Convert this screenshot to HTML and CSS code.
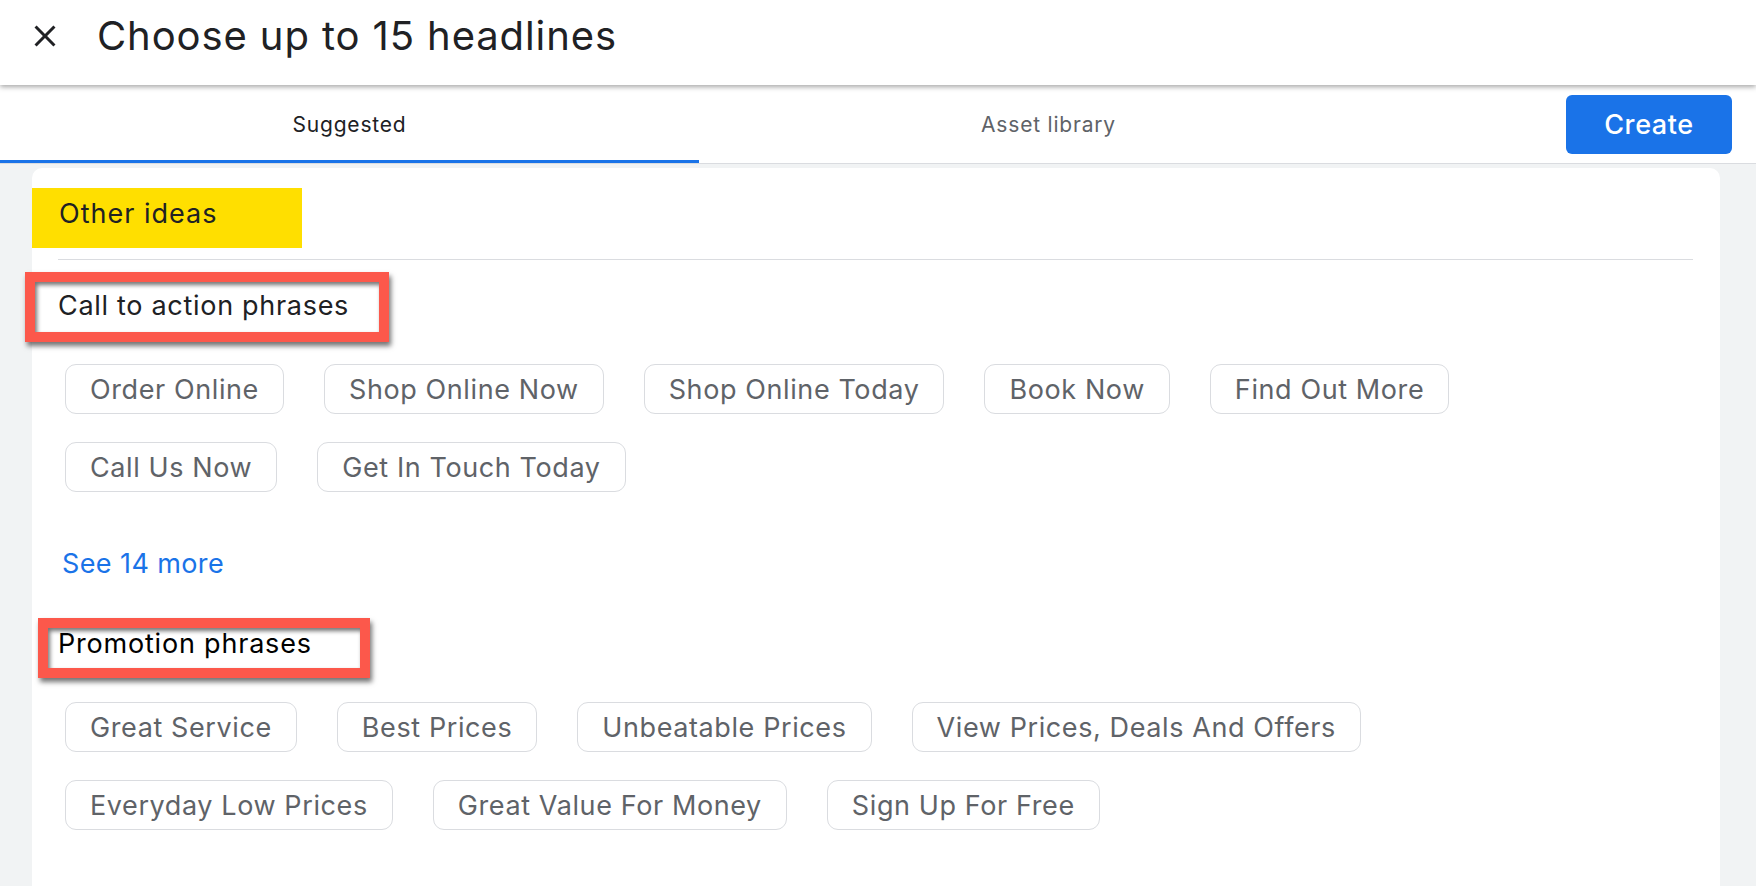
FILE: index.html
```html
<!DOCTYPE html>
<html lang="en">
<head>
<meta charset="utf-8">
<title>Choose up to 15 headlines</title>
<link rel="stylesheet" href="styles.css">
</head>
<body>
<header class="header">
  <svg class="close-icon" viewBox="0 0 24 24" width="36" height="36" aria-hidden="true"><path d="M19 6.41L17.59 5 12 10.59 6.41 5 5 6.41 10.59 12 5 17.59 6.41 19 12 13.41 17.59 19 19 17.59 13.41 12z" fill="#202124"/></svg>
  <h1 class="title">Choose up to 15 headlines</h1>
</header>
<nav class="tabbar">
  <div class="tab tab-active">Suggested</div>
  <div class="tab">Asset library</div>
  <button class="create-btn">Create</button>
</nav>
<main class="main">
  <section class="card">
    <div class="other-ideas">Other ideas</div>
    <hr class="divider">
    <h2 class="group-title group-cta"><span class="annot annot-cta"></span>Call to action phrases</h2>
    <div class="chips">
      <span class="chip">Order Online</span>
      <span class="chip">Shop Online Now</span>
      <span class="chip">Shop Online Today</span>
      <span class="chip">Book Now</span>
      <span class="chip">Find Out More</span>
      <span class="chip">Call Us Now</span>
      <span class="chip">Get In Touch Today</span>
    </div>
    <a class="see-more" href="#">See 14 more</a>
    <h2 class="group-title group-promo"><span class="annot annot-promo"></span>Promotion phrases</h2>
    <div class="chips">
      <span class="chip">Great Service</span>
      <span class="chip">Best Prices</span>
      <span class="chip">Unbeatable Prices</span>
      <span class="chip">View Prices, Deals And Offers</span>
      <span class="chip">Everyday Low Prices</span>
      <span class="chip">Great Value For Money</span>
      <span class="chip">Sign Up For Free</span>
    </div>
  </section>
</main>
</body>
</html>
```
FILE: styles.css
```css
* { box-sizing: border-box; }
html, body { margin: 0; padding: 0; }
body {
  font-family: Inter, Roboto, "Liberation Sans", sans-serif;
  color: #202124;
  background: #f1f3f4;
  width: 1756px;
  height: 886px;
  overflow: hidden;
  display: flex;
  flex-direction: column;
}
.header {
  position: relative;
  z-index: 2;
  height: 85px;
  background: #fff;
  display: flex;
  align-items: flex-start;
  padding: 18px 0 0 27px;
  box-shadow: 0 2px 5px rgba(0,0,0,0.35);
}
.close-icon { flex: none; display: block; }
.title {
  margin: -6px 0 0 34px;
  font-size: 40px;
  line-height: 48px;
  font-weight: 400;
  letter-spacing: 0.9px;
  color: #202124;
}
.tabbar {
  height: 79px;
  background: #fff;
  border-bottom: 1px solid #dadce0;
  display: flex;
  align-items: center;
}
.tab {
  width: 699px;
  height: 100%;
  display: flex;
  align-items: center;
  justify-content: center;
  font-size: 21px;
  letter-spacing: 0.8px;
  color: #5f6368;
  border-bottom: 3px solid transparent;
  padding-top: 3px;
}
.tab-active {
  color: #202124;
  border-bottom-color: #1a73e8;
}
.create-btn {
  margin-left: 168px;
  width: 166px;
  height: 59px;
  border: 0;
  border-radius: 6px;
  background: #1a73e8;
  color: #fff;
  font-family: inherit;
  font-size: 27px;
  font-weight: 500;
  letter-spacing: 0.6px;
}
.main {
  flex: 1;
  padding: 4px 36px 0 32px;
  display: flex;
  flex-direction: column;
}
.card {
  flex: 1;
  background: #fff;
  border-radius: 10px 10px 0 0;
  padding: 20px 27px 0 26px;
}
.other-ideas {
  margin-left: -26px;
  width: 270px;
  height: 60px;
  background: #ffdf00;
  font-size: 27px;
  line-height: 36px;
  letter-spacing: 1px;
  padding: 8px 0 0 27px;
  color: #202124;
}
.divider {
  margin: 11px 0 0 0;
  border: 0;
  border-top: 1px solid #dadce0;
  height: 0;
}
.group-title {
  position: relative;
  margin: 0;
  font-size: 27px;
  line-height: 36px;
  font-weight: 400;
  letter-spacing: 0.7px;
  color: #202124;
  padding-left: 0;
}
.group-cta { margin-top: 28px; }
.group-promo { margin-top: 44px; color: #000; letter-spacing: 0.8px; }
.annot {
  position: absolute;
  border: 10px solid #fc584b;
  box-shadow: 2px 4px 5px rgba(0,0,0,0.55), inset 2px 3px 4px rgba(0,0,0,0.55);
  pointer-events: none;
}
.annot-cta { left: -33px; top: -16px; width: 364px; height: 70px; }
.annot-promo { left: -20px; top: -8px; width: 332px; height: 60px; }
.chips {
  display: flex;
  flex-wrap: wrap;
  gap: 28px 40px;
  margin: 40px 0 0 7px;
  width: 1420px;
}
.chip {
  height: 50px;
  display: inline-flex;
  align-items: center;
  padding: 0 24px;
  border: 1px solid #dadce0;
  border-radius: 11px;
  font-size: 27px;
  letter-spacing: 0.6px;
  color: #5f6368;
  white-space: nowrap;
}
.see-more {
  display: block;
  margin: 54px 0 0 4px;
  font-size: 27px;
  line-height: 36px;
  letter-spacing: 0.4px;
  color: #1a73e8;
  text-decoration: none;
  width: max-content;
}
```
